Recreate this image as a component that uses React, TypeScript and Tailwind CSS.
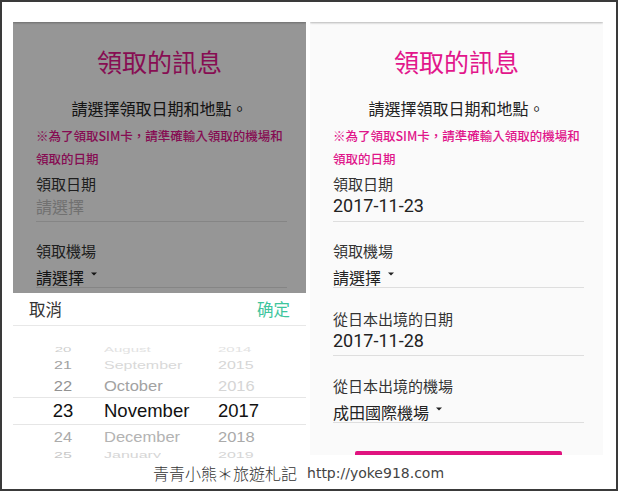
import React from "react";

const CJK = "font-['Noto_Sans_CJK_TC','Noto_Sans',sans-serif]";

function Caret() {
  return (
    <svg width="6" height="4" viewBox="0 0 6 4" className="ml-[7px] mt-[5px] shrink-0">
      <path d="M0 0.5 L6 0.5 L3 3.5 Z" fill="#222" />
    </svg>
  );
}

function DateField({ label, value, last }: { label: string; value?: string; last?: boolean }) {
  return (
    <div className={`border-b border-[#dedede] ${last ? "mb-[19px] pb-[3px]" : "mb-[18px] pb-[4px]"}`}>
      <div className="text-[15px] leading-[22px] text-[#333]">{label}</div>
      {value ? (
        <div className="font-['Roboto',sans-serif] text-[18px] leading-[22px] text-[#222]">{value}</div>
      ) : (
        <div className="text-[16px] leading-[22px] text-[#bdbdbd]">請選擇</div>
      )}
    </div>
  );
}

function SelectField({ label, value }: { label: string; value: string }) {
  return (
    <div className="mb-[20px] border-b border-[#dedede]">
      <div className="text-[15px] leading-[22px] text-[#333]">{label}</div>
      <div className="mt-[5px] flex items-start text-[16px] leading-[20px] text-[#222]">
        <span>{value}</span>
        <Caret />
      </div>
    </div>
  );
}

function FormBody({ pickedDate }: { pickedDate?: string }) {
  return (
    <div className={`flex flex-col ${CJK}`}>
      <div className="relative z-10 h-[9px] bg-white shadow-[0_1px_2px_rgba(0,0,0,0.28)]" />
      <h1 className="mt-[23px] text-center text-[25px] leading-[32px] text-[#e2168b]">領取的訊息</h1>
      <p className="mt-[19px] text-center text-[16px] leading-[24px] text-[#222]">請選擇領取日期和地點。</p>
      <div className="pl-[23px] pr-[19px]">
        <p className="mt-[4px] whitespace-nowrap text-[12.5px] font-medium leading-[23px] text-[#e0158a]">
          ※為了領取SIM卡，請準確輸入領取的機場和
          <br />
          領取的日期
        </p>
        <div className="mt-[3px]">
          <DateField label="領取日期" value={pickedDate} />
          <SelectField label="領取機場" value="請選擇" />
          <DateField label="從日本出境的日期" value="2017-11-28" last />
          <SelectField label="從日本出境的機場" value="成田國際機場" />
        </div>
        <div className="ml-[22px] mt-[28px] h-[40px] w-[207px] rounded-[2px] bg-[#e0137f]" />
      </div>
    </div>
  );
}

type Cell = { t: string; c: string };

function WheelRow({
  cells,
  h,
  size,
  scale,
  bold,
}: {
  cells: [Cell, Cell, Cell];
  h: string;
  size: string;
  scale: string;
  bold?: boolean;
}) {
  return (
    <div className={`flex items-center ${h} ${size} ${bold ? "font-medium" : ""}`}>
      <span className={`ml-[20px] w-[60px] text-center ${scale}`} style={{ color: cells[0].c }}>
        {cells[0].t}
      </span>
      <span className={`ml-[11px] w-[114px] ${scale}`} style={{ color: cells[1].c }}>
        {cells[1].t}
      </span>
      <span className={`${scale}`} style={{ color: cells[2].c }}>
        {cells[2].t}
      </span>
    </div>
  );
}

function DateSheet() {
  return (
    <div className="absolute inset-x-0 bottom-0 top-[280px] bg-white">
      <div className={`flex h-[33px] items-center justify-between border-b border-[#e8e8e8] px-[16px] text-[16.5px] ${CJK}`}>
        <span className="text-[#333]">取消</span>
        <span className="text-[#3ec59d]">确定</span>
      </div>
      <div className="font-['Liberation_Sans',Arial,sans-serif] leading-none">
        <div className="h-[15px]" />
        <WheelRow
          h="h-[16px]"
          size="text-[15px]"
          scale="scale-y-[0.45]"
          cells={[
            { t: "20", c: "#cfcfcf" },
            { t: "August", c: "#e2e2e2" },
            { t: "2014", c: "#e2e2e2" },
          ]}
        />
        <WheelRow
          h="h-[16px]"
          size="text-[16px]"
          scale="scale-y-[0.72]"
          cells={[
            { t: "21", c: "#a3a3a3" },
            { t: "September", c: "#d9d9d9" },
            { t: "2015", c: "#d6d6d6" },
          ]}
        />
        <WheelRow
          h="h-[24px]"
          size="text-[16.5px]"
          scale="scale-y-[0.92]"
          cells={[
            { t: "22", c: "#929292" },
            { t: "October", c: "#a2a2a2" },
            { t: "2016", c: "#d5d5d5" },
          ]}
        />
        <div className="border-y border-[#e6e6e6]">
          <WheelRow
            h="h-[26px]"
            size="text-[18.5px]"
            scale=""
            bold
            cells={[
              { t: "23", c: "#111" },
              { t: "November", c: "#111" },
              { t: "2017", c: "#111" },
            ]}
          />
        </div>
        <WheelRow
          h="h-[23px]"
          size="text-[16.5px]"
          scale="scale-y-[0.92]"
          cells={[
            { t: "24", c: "#ababab" },
            { t: "December", c: "#b3b3b3" },
            { t: "2018", c: "#aaaaaa" },
          ]}
        />
        <WheelRow
          h="h-[14px]"
          size="text-[16px]"
          scale="scale-y-[0.55]"
          cells={[
            { t: "25", c: "#c8c8c8" },
            { t: "January", c: "#d6d6d6" },
            { t: "2019", c: "#d6d6d6" },
          ]}
        />
      </div>
    </div>
  );
}

export default function App() {
  return (
    <div className="box-border h-[491px] w-[618px] overflow-hidden border-2 border-[#3a3a3a] bg-white">
      <div className="flex items-start gap-[4px] pl-[11px] pt-[11px]">
        <div className="relative h-[445px] w-[293px] overflow-hidden bg-[#fafafa]">
          <FormBody />
          <div className="absolute inset-0 bg-black/40" />
          <DateSheet />
        </div>
        <div className="relative h-[442px] w-[293px] overflow-hidden bg-[#fafafa]">
          <FormBody pickedDate="2017-11-23" />
        </div>
      </div>
      <div className="mt-[3px] flex items-center pl-[151px] leading-[24px]">
        <span className={`text-[16px] font-light text-[#333] ${CJK}`}>青青小熊＊旅遊札記</span>
        <span className="ml-[10px] font-['DejaVu_Sans',Verdana,sans-serif] text-[14px] text-[#444]">http://yoke918.com</span>
      </div>
    </div>
  );
}
